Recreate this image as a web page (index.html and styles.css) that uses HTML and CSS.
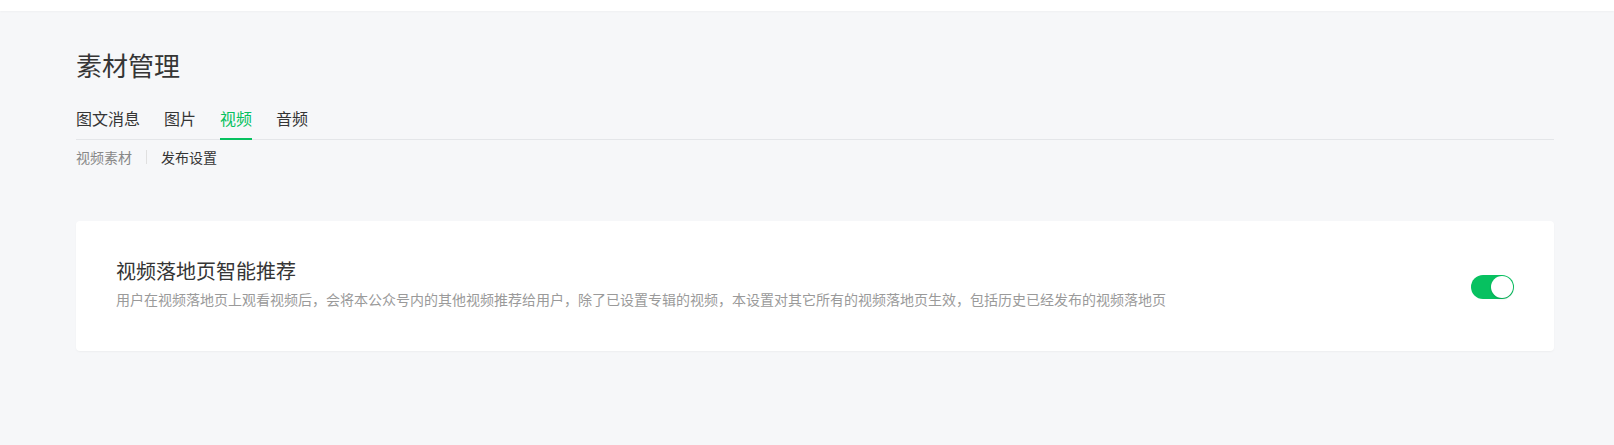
FILE: index.html
```html
<!DOCTYPE html>
<html lang="zh-CN">
<head>
    <meta charset="UTF-8">
    <meta name="viewport" content="width=device-width, initial-scale=1.0">
    <title>素材管理</title>
    <link rel="stylesheet" href="styles.css">
</head>
<body>
    <div class="topbar"></div>
    <div class="main">
        <h2 class="page-title">素材管理</h2>
        <ul class="tabs">
            <li class="tab">图文消息</li>
            <li class="tab">图片</li>
            <li class="tab active">视频</li>
            <li class="tab">音频</li>
        </ul>
        <div class="subnav">
            <span class="subnav-item">视频素材</span>
            <span class="subnav-sep"></span>
            <span class="subnav-item current">发布设置</span>
        </div>
        <div class="card">
            <div class="card-text">
                <div class="card-title">视频落地页智能推荐</div>
                <div class="card-desc">用户在视频落地页上观看视频后，会将本公众号内的其他视频推荐给用户，除了已设置专辑的视频，本设置对其它所有的视频落地页生效，包括历史已经发布的视频落地页</div>
            </div>
            <div class="switch on"><span class="knob"></span></div>
        </div>
    </div>
</body>
</html>
```

FILE: styles.css
```css
body {
    margin: 0;
    background-color: #f6f7f9;
    font-family: "Noto Sans CJK SC", "Noto Sans", sans-serif;
    color: #353535;
}

.topbar {
    height: 11px;
    background-color: #ffffff;
    box-shadow: 0 1px 2px rgba(0, 0, 0, .03);
}

.main {
    padding: 36px 60px 40px 76px;
}

.page-title {
    margin: 0;
    font-size: 26px;
    line-height: 36px;
    font-weight: normal;
    color: #353535;
}

.tabs {
    display: flex;
    list-style: none;
    margin: 23px 0 0;
    padding: 0;
    border-bottom: 1px solid #e4e6e9;
}

.tab {
    font-size: 16px;
    line-height: 24px;
    padding-bottom: 8px;
    margin-right: 24px;
    margin-bottom: -1px;
    border-bottom: 2px solid transparent;
}

.tab.active {
    color: #07c160;
    border-bottom-color: #07c160;
}

.subnav {
    display: flex;
    align-items: center;
    margin-top: 7px;
    font-size: 14px;
    line-height: 20px;
}

.subnav-item {
    color: #888888;
}

.subnav-item.current {
    color: #353535;
}

.subnav-sep {
    width: 1px;
    height: 14px;
    background-color: #e0e0e0;
    margin: 0 14px;
}

.card {
    display: flex;
    align-items: center;
    justify-content: space-between;
    margin-top: 54px;
    padding: 36px 40px 42px 40px;
    background-color: #ffffff;
    border-radius: 4px;
    box-shadow: 0 1px 2px rgba(0, 0, 0, .04);
}

.card-title {
    font-size: 20px;
    line-height: 28px;
    color: #353535;
}

.card-desc {
    margin-top: 4px;
    font-size: 14px;
    line-height: 20px;
    color: #9a9a9a;
}

.switch {
    position: relative;
    width: 43px;
    height: 24px;
    margin-top: 8px;
    border-radius: 12px;
    background-color: #e0e0e0;
    flex-shrink: 0;
}

.switch.on {
    background-color: #07c160;
}

.knob {
    position: absolute;
    top: 1px;
    right: 1px;
    width: 22px;
    height: 22px;
    border-radius: 50%;
    background-color: #ffffff;
    box-shadow: 0 1px 2px rgba(0, 0, 0, .15);
}
```
